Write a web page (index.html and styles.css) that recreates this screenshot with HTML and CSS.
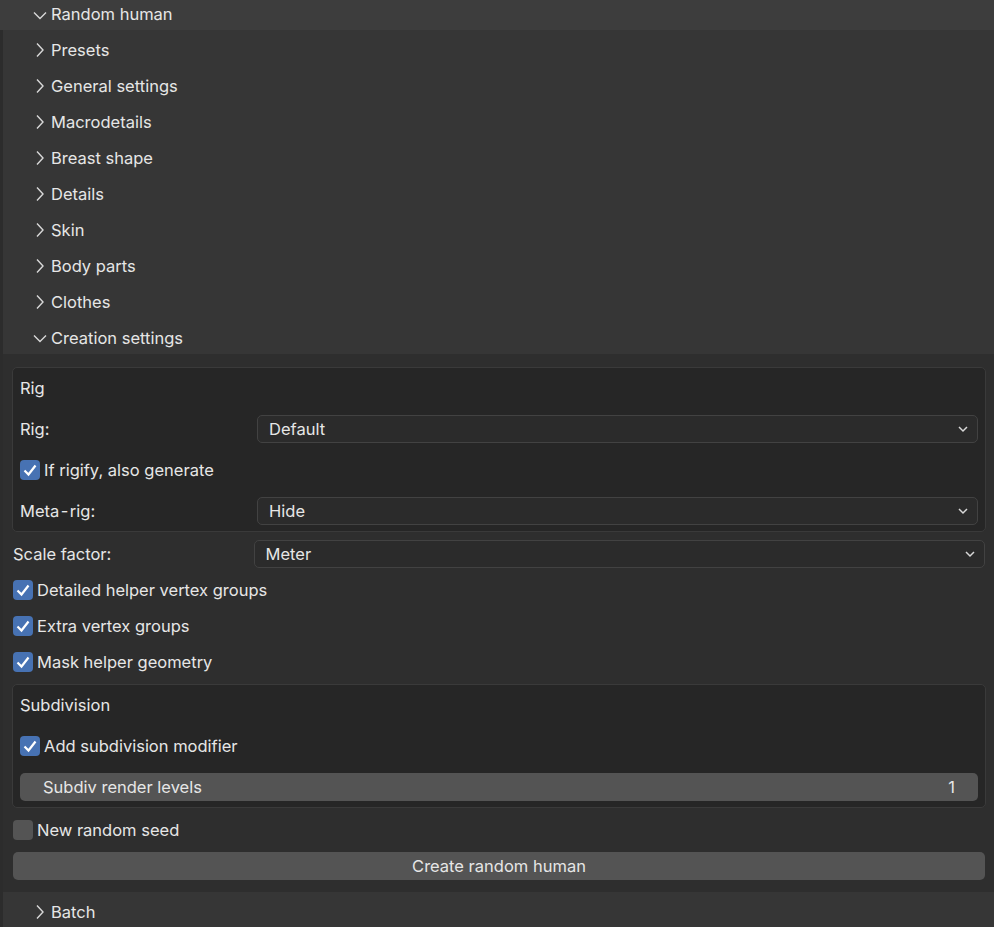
FILE: index.html
```html
<!DOCTYPE html>
<html lang="en">

<head>
    <meta charset="UTF-8">
    <title>Random human</title>
    <link rel="stylesheet" href="styles.css">
</head>

<body>
    <div class="panel">
        <div class="head top">
            <svg class="chev" viewBox="0 0 16 16"><path d="M2 5.5 L8 11.5 L14 5.5" /></svg>
            <span>Random human</span>
        </div>
        <div class="subs">
            <div class="head">
                <svg class="chev" viewBox="0 0 16 16"><path d="M5 1.5 L11 8 L5 14.5" /></svg>
                <span>Presets</span>
            </div>
            <div class="head">
                <svg class="chev" viewBox="0 0 16 16"><path d="M5 1.5 L11 8 L5 14.5" /></svg>
                <span>General settings</span>
            </div>
            <div class="head">
                <svg class="chev" viewBox="0 0 16 16"><path d="M5 1.5 L11 8 L5 14.5" /></svg>
                <span>Macrodetails</span>
            </div>
            <div class="head">
                <svg class="chev" viewBox="0 0 16 16"><path d="M5 1.5 L11 8 L5 14.5" /></svg>
                <span>Breast shape</span>
            </div>
            <div class="head">
                <svg class="chev" viewBox="0 0 16 16"><path d="M5 1.5 L11 8 L5 14.5" /></svg>
                <span>Details</span>
            </div>
            <div class="head">
                <svg class="chev" viewBox="0 0 16 16"><path d="M5 1.5 L11 8 L5 14.5" /></svg>
                <span>Skin</span>
            </div>
            <div class="head">
                <svg class="chev" viewBox="0 0 16 16"><path d="M5 1.5 L11 8 L5 14.5" /></svg>
                <span>Body parts</span>
            </div>
            <div class="head">
                <svg class="chev" viewBox="0 0 16 16"><path d="M5 1.5 L11 8 L5 14.5" /></svg>
                <span>Clothes</span>
            </div>
            <div class="head">
                <svg class="chev" viewBox="0 0 16 16"><path d="M2 5.5 L8 11.5 L14 5.5" /></svg>
                <span>Creation settings</span>
            </div>

            <div class="body">
                <div class="box">
                    <div class="row">Rig</div>
                    <div class="row">
                        <span class="label">Rig:</span>
                        <div class="select">Default
                            <svg class="drop" viewBox="0 0 12 12"><path d="M2 4 L6 8 L10 4" /></svg>
                        </div>
                    </div>
                    <div class="row">
                        <span class="check on"><svg viewBox="0 0 20 20"><path d="M4.5 10.5 L8.5 14.5 L15.5 5.5" /></svg></span>
                        <span>If rigify, also generate</span>
                    </div>
                    <div class="row">
                        <span class="label">Meta&#8202;-&#8202;rig:</span>
                        <div class="select">Hide
                            <svg class="drop" viewBox="0 0 12 12"><path d="M2 4 L6 8 L10 4" /></svg>
                        </div>
                    </div>
                </div>

                <div class="row out">
                    <span class="label">Scale factor:</span>
                    <div class="select">Meter
                        <svg class="drop" viewBox="0 0 12 12"><path d="M2 4 L6 8 L10 4" /></svg>
                    </div>
                </div>
                <div class="row out">
                    <span class="check on"><svg viewBox="0 0 20 20"><path d="M4.5 10.5 L8.5 14.5 L15.5 5.5" /></svg></span>
                    <span>Detailed helper vertex groups</span>
                </div>
                <div class="row out">
                    <span class="check on"><svg viewBox="0 0 20 20"><path d="M4.5 10.5 L8.5 14.5 L15.5 5.5" /></svg></span>
                    <span>Extra vertex groups</span>
                </div>
                <div class="row out">
                    <span class="check on"><svg viewBox="0 0 20 20"><path d="M4.5 10.5 L8.5 14.5 L15.5 5.5" /></svg></span>
                    <span>Mask helper geometry</span>
                </div>

                <div class="box">
                    <div class="row">Subdivision</div>
                    <div class="row">
                        <span class="check on"><svg viewBox="0 0 20 20"><path d="M4.5 10.5 L8.5 14.5 L15.5 5.5" /></svg></span>
                        <span>Add subdivision modifier</span>
                    </div>
                    <div class="row">
                        <div class="slider">
                            <span>Subdiv render levels</span>
                            <span>1</span>
                        </div>
                    </div>
                </div>

                <div class="row out">
                    <span class="check"></span>
                    <span>New random seed</span>
                </div>
                <div class="row">
                    <button class="btn">Create random human</button>
                </div>
            </div>

            <div class="head">
                <svg class="chev" viewBox="0 0 16 16"><path d="M5 1.5 L11 8 L5 14.5" /></svg>
                <span>Batch</span>
            </div>
        </div>
    </div>
</body>

</html>
```

FILE: styles.css
```css
body {
    margin: 0;
    background-color: #363636;
    font-family: Inter, "Noto Sans", sans-serif;
    font-size: 16.5px;
    color: #e6e6e6;
}

.panel {
    width: 994px;
    height: 927px;
    overflow: hidden;
    background: #363636;
}

.head {
    display: flex;
    align-items: center;
    height: 32px;
    padding-top: 4px;
    padding-left: 29px;
}

.head.top {
    height: 30px;
    padding-top: 0;
    padding-left: 32px;
    background: #3d3d3d;
    box-sizing: border-box;
}

.head.top span {
    margin-top: -2px;
}

.subs {
    border-left: 3px solid #2c2c2c;
}

.chev {
    width: 16px;
    height: 16px;
    margin-right: 3px;
    fill: none;
    stroke: #d8d8d8;
    stroke-width: 1.4;
}

.body {
    background: #2e2e2e;
    padding: 13px 8px 12px 9px;
    display: flex;
    flex-direction: column;
    gap: 8px;
}

.box {
    background: #262626;
    border: 1px solid #3a3a3a;
    border-radius: 5px;
    padding: 6px 7px;
    display: flex;
    flex-direction: column;
    gap: 13px;
}

.row {
    display: flex;
    align-items: center;
    height: 28px;
}

.row.out {
    padding: 0 1px;
}

.label {
    flex: 0 0 24.75%;
}

.select {
    flex: 1;
    height: 26px;
    display: flex;
    align-items: center;
    padding-left: 11px;
    padding-right: 8px;
    background: #2b2b2b;
    border: 1px solid #424242;
    border-radius: 5px;
}

.drop {
    width: 12px;
    height: 12px;
    margin-left: auto;
    fill: none;
    stroke: #d8d8d8;
    stroke-width: 1.5;
}

.check {
    width: 20px;
    height: 20px;
    border-radius: 4px;
    background: #545454;
    margin-right: 4px;
    flex: none;
}

.check.on {
    background: #4772b3;
}

.check svg {
    width: 20px;
    height: 20px;
    fill: none;
    stroke: #ffffff;
    stroke-width: 2.2;
}

.slider {
    flex: 1;
    height: 28px;
    display: flex;
    align-items: center;
    justify-content: space-between;
    padding: 0 23px 0 23px;
    background: #545454;
    border-radius: 5px;
}

.btn {
    flex: 1;
    height: 28px;
    margin: 0 1px;
    border: none;
    border-radius: 5px;
    background: #545454;
    color: #e6e6e6;
    font-family: inherit;
    font-size: 16.5px;
}
```
